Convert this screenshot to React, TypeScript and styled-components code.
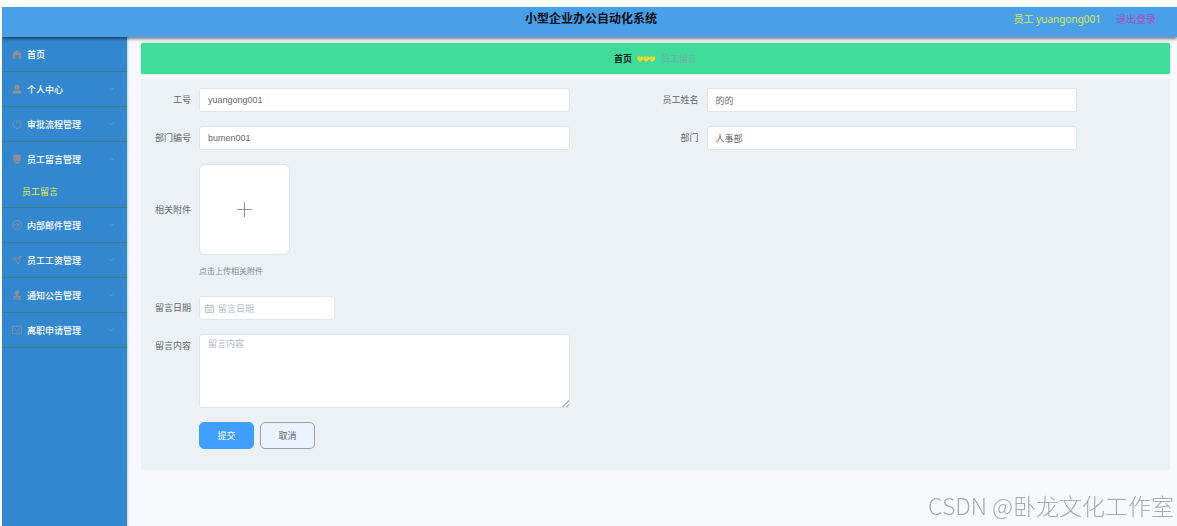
import React from "react";
import styled, { createGlobalStyle } from "styled-components";

const GlobalStyle = createGlobalStyle`
  * { box-sizing: border-box; }
  body {
    margin: 0;
    background: #fff;
    font-family: "Noto Sans", "Noto Sans CJK SC", sans-serif;
    font-size: 9px;
    color: #66686c;
  }
  button, input, textarea { font: inherit; color: inherit; }
`;

const Page = styled.div`
  min-height: 100vh;
  padding: 7px 0 0 2px;
  display: flex;
  flex-direction: column;
`;

const Header = styled.header`
  position: relative;
  z-index: 1;
  display: grid;
  grid-template-columns: 1fr auto 1fr;
  height: 30px;
  padding: 0 21px 0 24px;
  background: #4a9fe9;
  box-shadow: 0 2px 3px rgba(0, 0, 0, 0.5);
  clip-path: inset(0 0 -6px 0);
  line-height: 24px;
`;

const Title = styled.h1`
  grid-column: 2;
  margin: 0;
  font-size: 12px;
  font-weight: 700;
  line-height: 24px;
  color: #0b0f14;
`;

const Account = styled.div`
  display: flex;
  justify-content: flex-end;
  gap: 15px;
  font-size: 10px;
  color: #d8ea52;
`;

const Logout = styled.a`
  color: #a24fc0;
  text-decoration: none;
`;

const Body = styled.div`
  flex: 1;
  display: flex;
  background: #f6f8fb;
`;

const Sidebar = styled.nav`
  flex: 0 0 125px;
  background: #3387cf;
  box-shadow: 1px 0 2px rgba(60, 110, 160, 0.3);
`;

const MenuItem = styled.button<{ $open?: boolean }>`
  display: flex;
  align-items: center;
  gap: 5px;
  width: 100%;
  height: 35px;
  padding: 0 13px 0 10px;
  border: 0;
  border-bottom: 1px solid ${(p) => (p.$open ? "transparent" : "#3b7f84")};
  background: none;
  color: #fff;
  font-weight: 500;
  text-align: left;
  white-space: nowrap;
`;

const MenuText = styled.span`
  flex: 1;
`;

const SubItem = styled.a`
  display: block;
  height: 31px;
  padding-left: 20px;
  border-bottom: 1px solid #3b7f84;
  color: #e3ee4a;
  line-height: 30px;
  text-decoration: none;
`;

const Content = styled.main`
  flex: 1;
  min-width: 0;
  padding: 6px 7px 56px 14px;
`;

const Crumbs = styled.div`
  display: flex;
  align-items: center;
  justify-content: center;
  gap: 5px;
  height: 31px;
  border-radius: 2px;
  background: #3fdb9b;
  box-shadow: 0 0 2px rgba(63, 170, 130, 0.5);
`;

const CrumbLink = styled.a`
  color: #10291f;
  font-weight: 700;
  text-decoration: none;
`;

const CrumbCurrent = styled.span`
  color: #77aaa8;
`;

const Form = styled.form`
  display: grid;
  grid-template-columns: 1fr 1fr;
  row-gap: 14px;
  margin-top: 5px;
  padding: 9px 7px 21px;
  background: #ebf1f4;
`;

const Field = styled.div<{ $wide?: boolean }>`
  grid-column: ${(p) => (p.$wide ? "1" : "auto")};
  display: grid;
  grid-template-columns: 43px minmax(0, 1fr);
  column-gap: 8px;
  padding-right: 86px;
`;

const Label = styled.label<{ $tall?: boolean }>`
  line-height: ${(p) => (p.$tall ? 91 : 24)}px;
  text-align: right;
  white-space: nowrap;
`;

const TextInput = styled.input`
  width: 100%;
  height: 24px;
  padding: 0 8px;
  border: 1px solid #e0e5ea;
  border-radius: 3px;
  background: #fff;
  font-family: "Liberation Sans", "Noto Sans CJK SC", sans-serif;
  outline: none;
`;

const DateBox = styled.div`
  display: flex;
  align-items: center;
  gap: 4px;
  width: 136px;
  height: 24px;
  padding: 0 5px;
  border: 1px solid #e0e5ea;
  border-radius: 3px;
  background: #fff;
  color: #b4bac4;
`;

const DateInput = styled.input`
  flex: 1;
  min-width: 0;
  padding: 0;
  border: 0;
  background: none;
  outline: none;
  &::placeholder { color: #b4bac4; }
`;

const TextArea = styled.textarea`
  display: block;
  width: 100%;
  height: 74px;
  padding: 3px 8px;
  border: 1px solid #e0e5ea;
  border-radius: 3px;
  background: #fff;
  line-height: 12px;
  outline: none;
  resize: vertical;
  &::placeholder { color: #b4bac4; }
  &::-webkit-resizer {
    background: linear-gradient(135deg, transparent 50%, #b5b5b5 50% 62%, transparent 62% 74%, #b5b5b5 74% 86%, transparent 86%)
      right bottom / 7px 7px no-repeat;
  }
`;

const UploadTile = styled.label`
  display: flex;
  align-items: center;
  justify-content: center;
  width: 91px;
  height: 91px;
  border: 1px solid #e0e5ea;
  border-radius: 6px;
  background: #fff;
  color: #8c939d;
`;

const Tip = styled.p`
  margin: 8px 0 3px;
  font-size: 8px;
  line-height: 16px;
  color: #7f8792;
`;

const Actions = styled.div`
  grid-column: 1;
  display: flex;
  gap: 6px;
  padding-left: 51px;
`;

const Button = styled.button<{ $primary?: boolean }>`
  width: 55px;
  height: 27px;
  padding: 0;
  border: 1px solid ${(p) => (p.$primary ? "#409eff" : "#9aa3ad")};
  border-radius: 5px;
  background: ${(p) => (p.$primary ? "#409eff" : "#ebf3ff")};
  color: ${(p) => (p.$primary ? "#fff" : "#606266")};
`;

const Watermark = styled.div`
  position: fixed;
  right: 3px;
  bottom: 4px;
  z-index: 2;
  font-family: "Noto Sans CJK SC", sans-serif;
  font-size: 23px;
  font-weight: 300;
  line-height: 34px;
  color: #a6a9ad;
  text-shadow: -1px -1px 0 #fff;
  pointer-events: none;
`;

const icons = {
  home: <path fill="currentColor" stroke="none" d="M8 1 1 7v8.500h4.500V10h5v5.500H15V7z" />,
  user: (
    <g fill="currentColor" stroke="none">
      <circle cx="8" cy="5" r="4" />
      <path d="M1 15v-2q0-3 3-3h8q3 0 3 3v2z" />
    </g>
  ),
  power: <path d="M5 2.300a6.700 6.700 0 1 0 6 0M8 .8V7" />,
  comment: <path fill="currentColor" stroke="none" d="M3 1h10q1 0 1 1v9H2V2q0-1 1-1zM3 12h10v2h-2l-1 1.500H6L5 14H3z" />,
  gauge: (
    <>
      <circle cx="8" cy="8" r="7.200" />
      <path d="M3.800 9.500a4.300 4.300 0 0 1 8.400 0M8 12l2.500-6" />
    </>
  ),
  send: <path d="M15 1.500 1 7l5.500 2.500L9.500 15zM6.500 9.500 15 1.500" />,
  stamp: (
    <path
      fill="currentColor"
      stroke="none"
      d="M8 .5a3.400 3.400 0 0 1 2.200 6L9.500 9.500H14v3H2v-3h4.500L5.800 6.500A3.400 3.400 0 0 1 8 .5zM1 13.700h14v1.500H1z"
    />
  ),
  form: <path d="M1 2h14v12H1zM3.500 5.500h2.500M5 8l2.500 2.500L12 5.500M10.500 11.500H13" />,
};

type IconName = keyof typeof icons;

const Icon = ({ name }: { name: IconName }) => (
  <svg width="10" height="10" viewBox="0 0 16 16" fill="none" stroke="#8d919b" color="#8f9096" strokeWidth="1.2" aria-hidden="true">
    {icons[name]}
  </svg>
);

const Chevron = ({ up }: { up?: boolean }) => (
  <svg width="6" height="4" viewBox="0 0 6 4" fill="none" stroke="#7396b8" strokeWidth="0.8" aria-hidden="true">
    <path d={up ? "M.5 3.500 3 1l2.500 2.500" : "M.5.5 3 3 5.500.5"} />
  </svg>
);

const Hearts = () => (
  <svg width="19" height="6" viewBox="0 0 19 6" fill="#f8d72c" aria-hidden="true">
    {[0, 6, 12].map((x) => (
      <path key={x} transform={`translate(${x} 0)`} d="M3.200 6 .4 3.400C-.6 1.200 1.800-.9 3.200.9 4.600-.9 7 1.200 6 3.400z" />
    ))}
  </svg>
);

const menu: { text: string; icon: IconName; leaf?: boolean; child?: string }[] = [
  { text: "首页", icon: "home", leaf: true },
  { text: "个人中心", icon: "user" },
  { text: "审批流程管理", icon: "power" },
  { text: "员工留言管理", icon: "comment", child: "员工留言" },
  { text: "内部邮件管理", icon: "gauge" },
  { text: "员工工资管理", icon: "send" },
  { text: "通知公告管理", icon: "stamp" },
  { text: "离职申请管理", icon: "form" },
];

const fields = [
  { id: "number", label: "工号", value: "yuangong001" },
  { id: "name", label: "员工姓名", value: "的的" },
  { id: "deptNumber", label: "部门编号", value: "bumen001" },
  { id: "dept", label: "部门", value: "人事部" },
];

export default function App() {
  return (
    <Page>
      <GlobalStyle />
      <Header>
        <Title>小型企业办公自动化系统</Title>
        <Account>
          <span>员工 yuangong001</span>
          <Logout href="#logout">退出登录</Logout>
        </Account>
      </Header>
      <Body>
        <Sidebar>
          {menu.map((item) => (
            <React.Fragment key={item.text}>
              <MenuItem type="button" $open={!!item.child}>
                <Icon name={item.icon} />
                <MenuText>{item.text}</MenuText>
                {!item.leaf && <Chevron up={!!item.child} />}
              </MenuItem>
              {item.child && <SubItem href="#messages">{item.child}</SubItem>}
            </React.Fragment>
          ))}
        </Sidebar>
        <Content>
          <Crumbs>
            <CrumbLink href="#home">首页</CrumbLink>
            <Hearts />
            <CrumbCurrent>员工留言</CrumbCurrent>
          </Crumbs>
          <Form onSubmit={(e) => e.preventDefault()}>
            {fields.map((f) => (
              <Field key={f.id}>
                <Label htmlFor={f.id}>{f.label}</Label>
                <TextInput id={f.id} defaultValue={f.value} readOnly />
              </Field>
            ))}
            <Field $wide>
              <Label htmlFor="file" $tall>相关附件</Label>
              <div>
                <UploadTile>
                  <input id="file" type="file" hidden />
                  <svg width="15" height="15" viewBox="0 0 15 15" stroke="currentColor" aria-hidden="true">
                    <path d="M7.500 0v15M0 7.500h15" />
                  </svg>
                </UploadTile>
                <Tip>点击上传相关附件</Tip>
              </div>
            </Field>
            <Field $wide>
              <Label htmlFor="date">留言日期</Label>
              <DateBox>
                <svg width="9" height="9" viewBox="0 0 9 9" fill="none" stroke="currentColor" strokeWidth="0.8" aria-hidden="true">
                  <path d="M.5 1.500h8v7h-8zM.5 3.500h8M2.500.3v2M6.500.3v2M2 5.200h5M2 6.900h5" />
                </svg>
                <DateInput id="date" placeholder="留言日期" />
              </DateBox>
            </Field>
            <Field $wide>
              <Label htmlFor="content">留言内容</Label>
              <TextArea id="content" placeholder="留言内容" />
            </Field>
            <Actions>
              <Button type="submit" $primary>提交</Button>
              <Button type="button">取消</Button>
            </Actions>
          </Form>
        </Content>
      </Body>
      <Watermark>CSDN @卧龙文化工作室</Watermark>
    </Page>
  );
}
